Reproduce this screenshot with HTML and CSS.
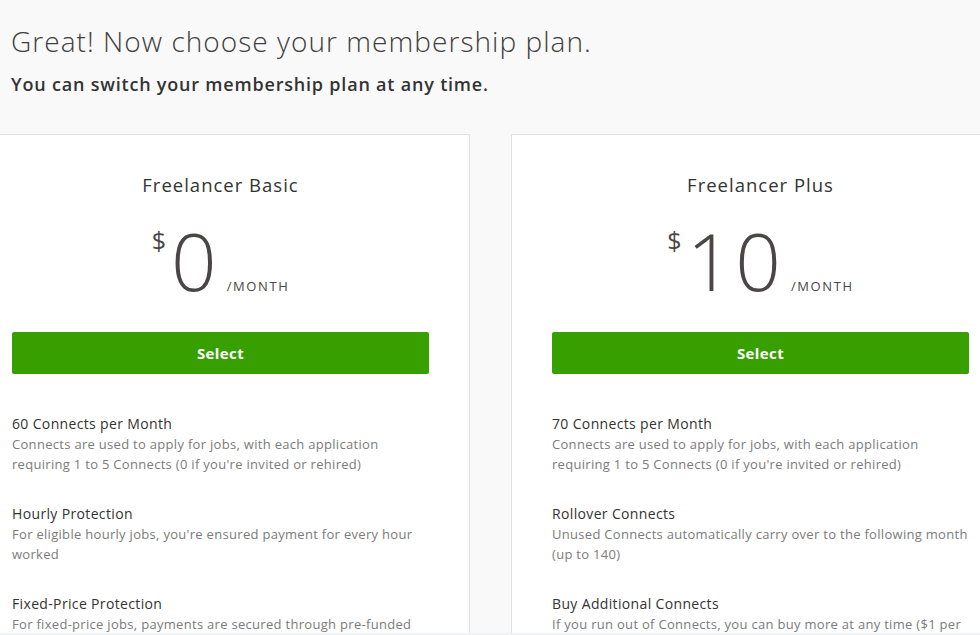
FILE: index.html
```html
<!DOCTYPE html>
<html lang="en">
<head>
<meta charset="utf-8">
<title>Membership plan</title>
<link rel="stylesheet" href="styles.css">
</head>
<body>
<main class="page">
  <header class="intro">
    <h1 class="title">Great! Now choose your membership plan.</h1>
    <p class="subtitle">You can switch your membership plan at any time.</p>
  </header>
  <section class="plans">
    <article class="plan">
      <h2 class="plan-name">Freelancer Basic</h2>
      <div class="price"><span class="currency">$</span><span class="amount">0</span><span class="period">/MONTH</span></div>
      <button class="select-btn" type="button">Select</button>
      <ul class="features">
        <li class="feature"><div class="feature-title">60 Connects per Month</div><div class="feature-desc">Connects are used to apply for jobs, with each application requiring 1 to 5 Connects (0 if you're invited or rehired)</div></li>
        <li class="feature"><div class="feature-title">Hourly Protection</div><div class="feature-desc">For eligible hourly jobs, you're ensured payment for every hour worked</div></li>
        <li class="feature"><div class="feature-title">Fixed-Price Protection</div><div class="feature-desc">For fixed-price jobs, payments are secured through pre-funded escrow milestones</div></li>
      </ul>
    </article>
    <article class="plan">
      <h2 class="plan-name">Freelancer Plus</h2>
      <div class="price"><span class="currency">$</span><span class="amount">10</span><span class="period">/MONTH</span></div>
      <button class="select-btn" type="button">Select</button>
      <ul class="features">
        <li class="feature"><div class="feature-title">70 Connects per Month</div><div class="feature-desc">Connects are used to apply for jobs, with each application requiring 1 to 5 Connects (0 if you're invited or rehired)</div></li>
        <li class="feature"><div class="feature-title">Rollover Connects</div><div class="feature-desc">Unused Connects automatically carry over to the following month (up to 140)</div></li>
        <li class="feature"><div class="feature-title">Buy Additional Connects</div><div class="feature-desc">If you run out of Connects, you can buy more at any time ($1 per 10 Connects)</div></li>
      </ul>
    </article>
  </section>
</main>
<div class="edge"></div>
</body>
</html>
```
FILE: styles.css
```css
html, body {
  margin: 0;
  padding: 0;
  background: #f9f9f9;
  overflow: hidden;
  height: 635px;
}
body {
  font-family: "Open Sans", "Liberation Sans", sans-serif;
  color: #3d3d3d;
}
.page {
  margin-left: -29px;
  padding-top: 22px;
}
.intro {
  padding-left: 40px;
}
.title {
  margin: 0;
  font-size: 28px;
  font-weight: 300;
  line-height: 38px;
  color: #404040;
  letter-spacing: 1.05px;
}
.subtitle {
  margin: 12px 0 0;
  font-size: 18px;
  font-weight: 600;
  line-height: 24px;
  color: #333;
  letter-spacing: 0.8px;
}
.plans {
  display: grid;
  grid-template-columns: 499px 499px;
  gap: 41px;
  margin-top: 38px;
}
.plan {
  background: #fff;
  border: 1px solid #e0e0e0;
  padding: 36px 40px 0;
  min-height: 600px;
}
.plan-name {
  margin: 0;
  text-align: center;
  font-size: 18.5px;
  font-weight: 400;
  line-height: 28px;
  color: #333;
  letter-spacing: 1px;
}
.price {
  display: flex;
  justify-content: center;
  align-items: flex-start;
  margin-top: 21px;
  height: 90px;
  color: #4a4646;
}
.currency {
  font-size: 25px;
  line-height: 26px;
  margin-top: 7px;
  margin-right: 5px;
}
.amount {
  font-size: 80px;
  font-weight: 300;
  line-height: 80px;
  letter-spacing: 3px;
}
.period {
  font-size: 13px;
  align-self: flex-end;
  margin-bottom: 15px;
  margin-left: 7px;
  letter-spacing: 1.6px;
}
.select-btn {
  display: block;
  width: 100%;
  height: 42px;
  margin-top: 22px;
  border: 0;
  border-radius: 2px;
  background: #37a000;
  color: #fff;
  font-family: inherit;
  font-size: 15px;
  font-weight: 700;
  letter-spacing: 0.4px;
}
.features {
  list-style: none;
  margin: 40px 0 0;
  padding: 0;
}
.feature {
  margin-bottom: 30px;
}
.feature-title {
  font-size: 14px;
  line-height: 20px;
  color: #333;
  letter-spacing: 0.35px;
}
.feature-desc {
  font-size: 13px;
  line-height: 20px;
  color: #7b7b7b;
  min-height: 40px;
  letter-spacing: 0.3px;
}
.edge {
  position: fixed;
  left: 0;
  right: 0;
  bottom: 0;
  height: 2px;
  background: #eef3f3;
}
```
